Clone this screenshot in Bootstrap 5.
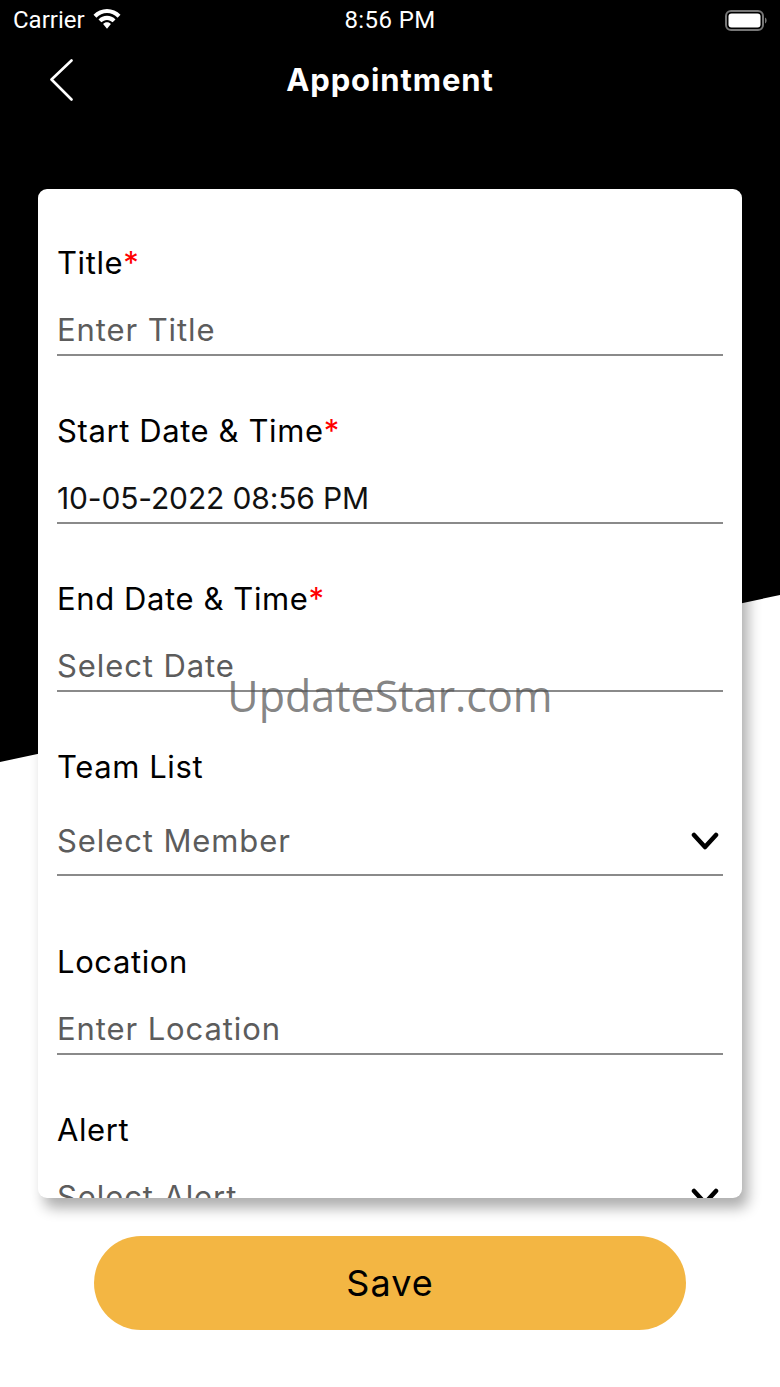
<!doctype html>
<html lang="en">
<head>
  <meta charset="utf-8" />
  <meta name="viewport" content="width=device-width, initial-scale=1" />
  <title>Appointment</title>
  <link href="https://cdn.jsdelivr.net/npm/bootstrap@5.3.0/dist/css/bootstrap.min.css" rel="stylesheet" />
  <style>
    body {
      margin: 0;
      background: #fff;
      font-family: "Inter", "Liberation Sans", sans-serif;
    }
    .screen {
      position: relative;
      height: 1387px;
      overflow: hidden;
    }
    .black-bg {
      position: absolute;
      inset: 0 0 auto 0;
      height: 770px;
      background: #000;
      clip-path: polygon(0 0, 780px 0, 780px 595px, 0 762px);
    }
    .status-bar {
      position: relative;
      height: 40px;
      padding: 0 13px;
      color: #fff;
      font-family: "Roboto", sans-serif;
      font-size: 24px;
    }
    .status-time {
      position: absolute;
      left: 0;
      right: 0;
      top: 6px;
      text-align: center;
      line-height: 28px;
      letter-spacing: .4px;
    }
    .wifi-icon {
      margin-bottom: 3px;
    }
    .top-nav {
      position: relative;
      height: 80px;
      color: #fff;
    }
    .back-btn {
      position: absolute;
      left: 49px;
      top: 19px;
    }
    .nav-title {
      font-size: 31px;
      font-weight: 700;
      line-height: 40px;
      letter-spacing: .9px;
      margin: 0;
    }
    .form-sheet {
      position: relative;
      margin: 69px 38px 0;
      height: 1009px;
      padding: 54px 19px 0;
      overflow: hidden;
      border: 0;
      border-radius: 9px;
      box-shadow: 6px 10px 14px rgba(0, 0, 0, .32);
    }
    .field {
      margin-bottom: 55px;
    }
    .field-wide {
      margin-bottom: 66px;
    }
    .field-label {
      display: block;
      margin: 0;
      font-size: 31px;
      line-height: 40px;
      letter-spacing: .6px;
      color: #000;
    }
    .req {
      color: #f00;
    }
    .field-value {
      height: 73px;
      padding-top: 27px;
      line-height: 40px;
      font-size: 31px;
      letter-spacing: .9px;
      color: #5c5c5c;
      border-bottom: 2px solid #8a8a8a;
    }
    .field-value.filled {
      color: #111;
      font-size: 30px;
      letter-spacing: -.15px;
    }
    .field-value.select-row {
      height: 89px;
      padding-top: 34px;
    }
    .field-value.select-cut {
      padding-top: 27px;
    }
    .chev {
      margin: 11px 4px 0 0;
    }
    .save-btn {
      display: block;
      width: 592px;
      height: 94px;
      margin: 38px auto 0;
      background: #f3b643;
      border: 0;
      color: #000;
      font-size: 36px;
      letter-spacing: 1px;
    }
    .watermark {
      position: absolute;
      left: 0;
      right: 0;
      top: 665px;
      text-align: center;
      font-family: "Open Sans", sans-serif;
      font-size: 43px;
      line-height: 62px;
      color: rgba(80, 80, 80, .7);
      pointer-events: none;
    }
  </style>
</head>
<body>
  <div class="screen">
    <div class="black-bg"></div>

    <div class="status-bar d-flex align-items-center">
      <span>Carrier</span>
      <svg class="wifi-icon ms-2" width="28" height="22" viewBox="0 0 28 22" fill="#fff">
        <path d="M14 1C8.900 1 4 3.200 .5 6.800L3.400 9.700C6.200 6.900 10 5 14 5s7.800 1.900 10.600 4.700L27.500 6.800C24 3.200 19.100 1 14 1z"/>
        <path d="M14 7.800c-3.300 0-6.300 1.400-8.500 3.600l2.900 2.900c1.500-1.500 3.500-2.400 5.600-2.400s4.100 .9 5.600 2.400l2.900-2.900C20.300 9.200 17.300 7.800 14 7.800z"/>
        <path d="M14 14.300c-1.500 0-2.900 .6-3.900 1.600L14 20.800 17.900 15.900C16.900 14.900 15.500 14.300 14 14.300z"/>
      </svg>
      <div class="status-time">8:56 PM</div>
      <svg class="ms-auto" width="42" height="21" viewBox="0 0 42 21">
        <rect x="1" y="1" width="37" height="19" rx="5" fill="none" stroke="#777" stroke-width="2"/>
        <rect x="3.500" y="3.500" width="32" height="14" rx="3" fill="#fff"/>
        <path d="M40 7.500c1 .4 1.600 1.600 1.600 3s-.6 2.600-1.600 3z" fill="#777"/>
      </svg>
    </div>

    <div class="top-nav d-flex align-items-center justify-content-center">
      <svg class="back-btn" width="25" height="42" viewBox="0 0 25 42" fill="none" stroke="#fff" stroke-width="2.600" stroke-linecap="round" stroke-linejoin="round">
        <path d="M22.500 1.500L2.500 20.500L22.500 40.500"/>
      </svg>
      <h1 class="nav-title">Appointment</h1>
    </div>

    <div class="card form-sheet">
      <div class="field">
        <label class="field-label">Title<span class="req">*</span></label>
        <div class="field-value">Enter Title</div>
      </div>
      <div class="field">
        <label class="field-label">Start Date &amp; Time<span class="req">*</span></label>
        <div class="field-value filled">10-05-2022 08:56 PM</div>
      </div>
      <div class="field">
        <label class="field-label">End Date &amp; Time<span class="req">*</span></label>
        <div class="field-value">Select Date</div>
      </div>
      <div class="field-wide">
        <label class="field-label">Team List</label>
        <div class="field-value select-row d-flex justify-content-between">
          <span>Select Member</span>
          <svg class="chev" width="28" height="20" viewBox="0 0 28 20" fill="none" stroke="#000" stroke-width="4.500" stroke-linecap="round" stroke-linejoin="round">
            <path d="M3 3L14 15L25 3"/>
          </svg>
        </div>
      </div>
      <div class="field">
        <label class="field-label">Location</label>
        <div class="field-value">Enter Location</div>
      </div>
      <div class="field-wide">
        <label class="field-label">Alert</label>
        <div class="field-value select-row select-cut d-flex justify-content-between">
          <span>Select Alert</span>
          <svg class="chev" width="28" height="20" viewBox="0 0 28 20" fill="none" stroke="#000" stroke-width="4.500" stroke-linecap="round" stroke-linejoin="round">
            <path d="M3 3L14 15L25 3"/>
          </svg>
        </div>
      </div>
    </div>

    <button class="btn save-btn rounded-pill" type="button">Save</button>

    <div class="watermark">UpdateStar.com</div>
  </div>

  <script src="https://cdn.jsdelivr.net/npm/bootstrap@5.3.0/dist/js/bootstrap.bundle.min.js"></script>
</body>
</html>
